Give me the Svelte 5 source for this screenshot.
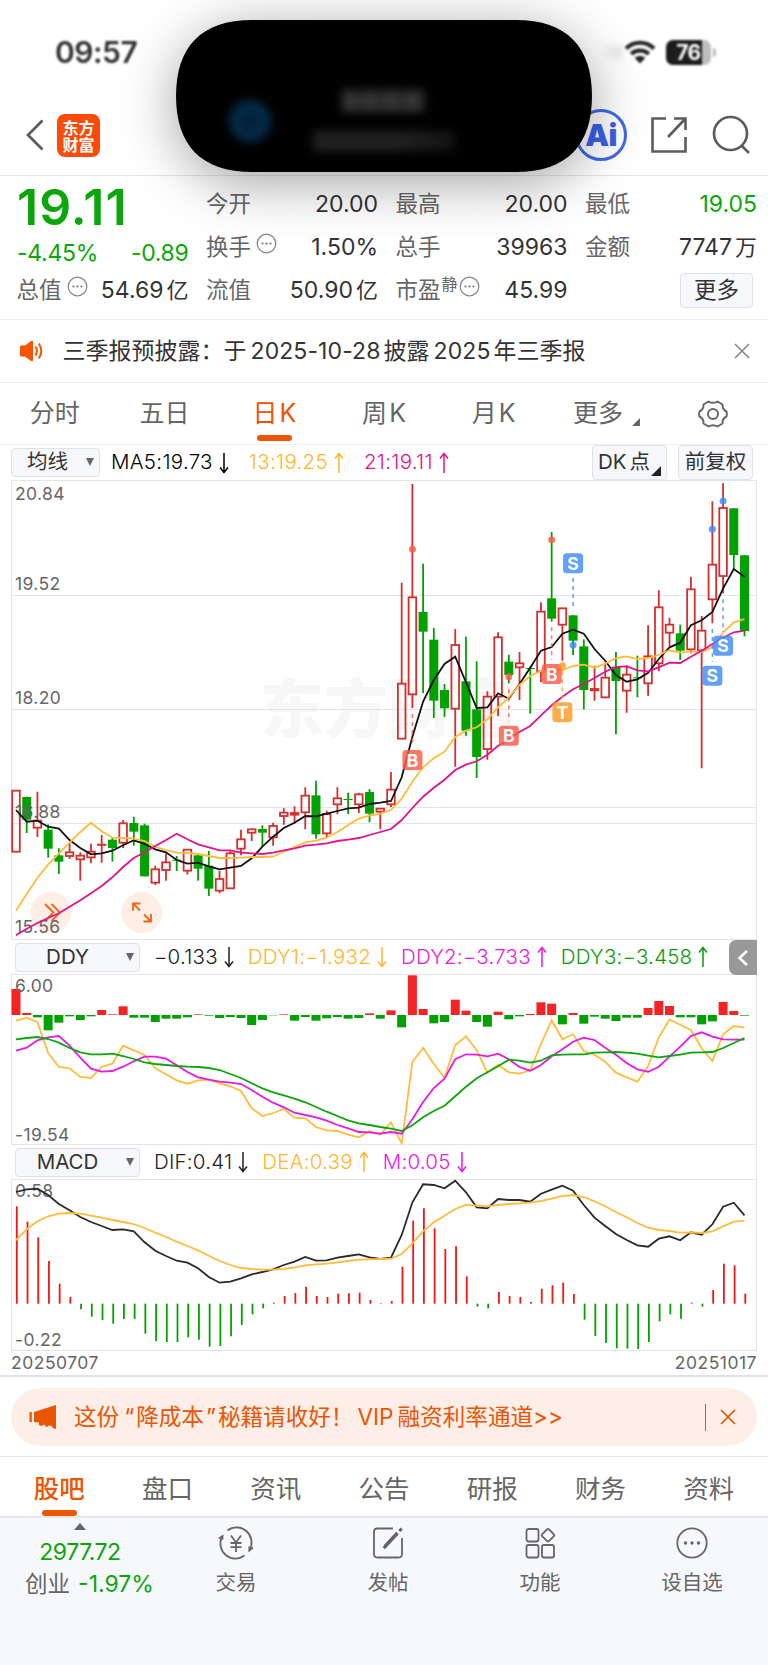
<script>
  // Stock detail page: quote header, daily K chart, DDY + MACD panels

  // chart values are stored in @3x device pixels
  const STEP = 32.14;
  const cx = (i) => (15 + i * STEP) / 3;

  const periods = [
    { cn: "分时" },
    { cn: "五日" },
    { cn: "日", latin: "K", active: true },
    { cn: "周", latin: "K" },
    { cn: "月", latin: "K" },
    { cn: "更多", more: true }
  ];

  const sections = ["股吧", "盘口", "资讯", "公告", "研报", "财务", "资料"];

  // [up, high, body top, body bottom, low]
  const candles = [
    [1, 962, 962, 1145, 1145], [0, 980, 981, 1049, 1089], [1, 965, 1052, 1073, 1101], [0, 1063, 1079, 1136, 1163],
    [0, 1135, 1156, 1175, 1212], [1, 1118, 1147, 1158, 1167], [1, 1147, 1157, 1168, 1232], [1, 1121, 1145, 1162, 1180],
    [1, 1095, 1124, 1124, 1178], [0, 1102, 1109, 1134, 1175], [1, 1050, 1060, 1118, 1134], [0, 1040, 1059, 1085, 1127],
    [0, 1061, 1066, 1219, 1219], [1, 1187, 1198, 1238, 1245], [1, 1150, 1177, 1200, 1232], [0, 1158, 1169, 1172, 1203],
    [1, 1139, 1139, 1202, 1214], [0, 1155, 1156, 1196, 1232], [0, 1143, 1187, 1256, 1278], [1, 1203, 1227, 1262, 1270],
    [1, 1143, 1150, 1255, 1255], [1, 1079, 1108, 1136, 1156], [1, 1076, 1078, 1088, 1113], [0, 1066, 1077, 1088, 1128],
    [1, 1058, 1068, 1102, 1127], [1, 1015, 1028, 1038, 1064], [1, 1009, 1029, 1034, 1061], [1, 952, 977, 1027, 1078],
    [0, 932, 976, 1093, 1106], [1, 1022, 1032, 1090, 1101], [1, 952, 985, 1003, 1033], [0, 968, 987, 990, 1032],
    [1, 968, 973, 1003, 1029], [0, 957, 966, 1031, 1057], [1, 1014, 1016, 1025, 1078], [1, 906, 959, 1003, 1011],
    [1, 338, 641, 806, 806], [1, 42, 382, 673, 714], [0, 281, 426, 485, 669], [0, 474, 509, 692, 744],
    [0, 642, 660, 715, 741], [1, 477, 525, 716, 890], [0, 500, 634, 782, 797], [0, 574, 718, 861, 924],
    [1, 664, 680, 837, 869], [1, 487, 502, 680, 739], [0, 554, 575, 615, 640], [1, 546, 580, 592, 690],
    [0, 590, 594, 597, 731], [1, 397, 425, 604, 636], [0, 186, 385, 446, 455], [1, 413, 415, 464, 572],
    [0, 435, 436, 512, 555], [0, 508, 529, 660, 718], [1, 587, 657, 661, 692], [1, 578, 623, 682, 685],
    [0, 546, 590, 633, 793], [1, 586, 614, 662, 728], [0, 557, 622, 625, 682], [1, 466, 559, 640, 677],
    [1, 361, 412, 580, 604], [1, 443, 464, 488, 529], [0, 464, 490, 542, 570], [1, 320, 358, 538, 550],
    [1, 438, 482, 541, 895], [1, 94, 284, 388, 460], [1, 40, 114, 318, 370], [0, 114, 115, 255, 300],
    [0, 255, 256, 483, 499]
  ];

  const ma5 = [1020, 1055, 1052, 1070, 1076, 1110, 1134, 1153, 1150, 1142, 1126, 1111, 1122, 1138, 1147, 1170, 1181, 1178, 1189, 1198, 1193, 1188, 1165, 1130, 1100, 1074, 1058, 1038, 1039, 1031, 1023, 1015, 1013, 1002, 998, 993, 922, 800, 695, 630, 582, 560, 637, 714, 712, 670, 686, 642, 593, 542, 531, 491, 479, 491, 537, 572, 615, 635, 628, 608, 567, 532, 518, 466, 451, 426, 355, 297, 320];
  const ma13 = [1322, 1272, 1224, 1184, 1150, 1118, 1086, 1058, 1084, 1103, 1104, 1106, 1113, 1131, 1140, 1148, 1149, 1152, 1158, 1164, 1164, 1163, 1161, 1161, 1160, 1145, 1131, 1117, 1112, 1103, 1086, 1065, 1046, 1037, 1031, 1020, 986, 935, 892, 865, 845, 801, 782, 772, 748, 712, 682, 645, 618, 603, 603, 600, 588, 584, 593, 581, 564, 559, 567, 564, 555, 541, 548, 544, 546, 531, 488, 457, 447];
  const ma21 = [1396, 1376, 1359, 1344, 1330, 1310, 1291, 1270, 1248, 1222, 1191, 1164, 1147, 1128, 1110, 1091, 1108, 1123, 1132, 1141, 1141, 1148, 1150, 1152, 1148, 1141, 1135, 1127, 1124, 1120, 1113, 1109, 1104, 1095, 1086, 1077, 1050, 1014, 980, 953, 929, 900, 884, 874, 854, 827, 809, 786, 768, 736, 706, 680, 658, 642, 624, 605, 591, 589, 601, 604, 592, 578, 579, 560, 542, 522, 503, 487, 482];

  // i = candle index, y = badge centre, dot = price point, from/to = dashed leader
  const marks = [
    { i: 37, t: "B", y: 870, dot: 238, from: 732, to: 828 },
    { i: 46, t: "B", y: 797, dot: 620, from: 658, to: 756 },
    { i: 50, t: "B", y: 612, dot: 209, from: 472, to: 570 },
    { i: 51, t: "T", y: 727, dot: 587, from: 604, to: 684 },
    { i: 52, t: "S", y: 280, dot: 525, from: 324, to: 420 },
    { i: 65, t: "S", y: 617, dot: 178, from: 477, to: 575 },
    { i: 66, t: "S", y: 527, dot: 93, from: 388, to: 486 }
  ];
  const markColor = { B: "#ff5a45", S: "#3f8cfb", T: "#ff9a22" };

  // negative = red bar above the zero line
  const ddyBars = [-78, -6, 7, 46, 23, 4, 15, 4, -15, -2, -26, 8, 8, 21, 11, 11, 7, -2, 2, 9, 6, 9, 30, 15, 1, -2, 17, 6, 17, 10, 6, 11, 9, -5, 11, -14, 37, -119, -18, 25, 21, -46, -13, 21, 35, -10, 13, 4, -3, -38, -34, 28, -6, 26, 5, 11, 18, 8, 8, -21, -42, -27, 7, 7, 28, 19, -39, -12, 2];
  const ddy1 = [272, 264, 276, 368, 411, 415, 441, 444, 410, 401, 347, 361, 376, 415, 433, 451, 461, 451, 449, 460, 469, 483, 535, 558, 549, 537, 563, 565, 591, 601, 603, 614, 622, 604, 614, 577, 640, 396, 353, 402, 443, 346, 319, 361, 428, 404, 427, 431, 421, 342, 271, 328, 313, 363, 374, 395, 428, 442, 455, 409, 322, 269, 284, 300, 355, 393, 313, 288, 293];
  const ddy2 = [362, 353, 331, 322, 318, 347, 383, 416, 425, 423, 410, 394, 380, 380, 386, 406, 426, 442, 449, 455, 458, 462, 480, 500, 518, 532, 548, 555, 562, 572, 585, 595, 606, 607, 611, 606, 611, 568, 516, 474, 446, 388, 373, 374, 379, 371, 388, 411, 422, 405, 379, 358, 335, 323, 330, 353, 374, 399, 418, 425, 410, 380, 350, 318, 307, 320, 328, 329, 329];
  const ddy3 = [328, 324, 321, 327, 338, 354, 367, 373, 373, 371, 378, 387, 397, 402, 405, 408, 410, 411, 414, 420, 432, 444, 460, 475, 487, 496, 506, 517, 531, 545, 558, 571, 580, 585, 591, 596, 603, 586, 562, 543, 527, 499, 470, 445, 427, 409, 389, 392, 398, 392, 376, 374, 373, 373, 368, 367, 366, 368, 371, 377, 382, 378, 374, 368, 367, 366, 354, 339, 324];

  const macdBars = [169, 215, 262, 333, 401, 441, 478, 500, 510, 521, 507, 507, 551, 573, 576, 576, 562, 569, 590, 588, 559, 525, 493, 475, 458, 438, 429, 410, 438, 441, 431, 430, 428, 450, 460, 453, 350, 212, 175, 235, 297, 289, 379, 470, 475, 426, 438, 441, 456, 416, 406, 398, 432, 509, 558, 579, 595, 596, 597, 576, 514, 493, 506, 458, 470, 420, 341, 346, 431];
  const dif = [126, 118, 116, 135, 162, 181, 201, 216, 228, 240, 238, 244, 277, 302, 318, 332, 338, 355, 381, 398, 395, 385, 373, 366, 358, 345, 335, 321, 332, 331, 323, 318, 313, 322, 327, 323, 255, 157, 103, 105, 115, 92, 127, 172, 175, 147, 150, 150, 155, 131, 119, 107, 122, 165, 203, 228, 252, 270, 286, 290, 266, 259, 271, 247, 254, 223, 170, 158, 196];
  const dea = [270, 238, 214, 199, 191, 189, 191, 197, 203, 210, 216, 222, 234, 248, 261, 275, 288, 301, 317, 333, 345, 354, 357, 359, 359, 357, 352, 346, 343, 341, 337, 333, 329, 328, 327, 326, 312, 280, 244, 217, 197, 177, 165, 167, 169, 165, 162, 160, 158, 153, 146, 138, 135, 141, 154, 169, 186, 202, 219, 233, 240, 243, 248, 247, 249, 244, 229, 215, 212];

  const line = (values, top) =>
    values.map((v, i) => `${cx(i).toFixed(1)},${((v - top) / 3).toFixed(1)}`).join(" ");
</script>

{#snippet arrow(up)}
  <svg class="arrow" width="10" height="22" viewBox="0 0 10 22">
    <path d={up ? "M5 21V1.5M1 6.5L5 1.5L9 6.5" : "M5 1V20.5M1 15.5L5 20.5L9 15.5"} />
  </svg>
{/snippet}

{#snippet info()}
  <svg class="info" width="21" height="21" viewBox="0 0 21 21">
    <circle cx="10.5" cy="10.5" r="9.3" fill="none" stroke="#8a8a8a" stroke-width="1.3" />
    <g fill="#777"><circle cx="6.5" cy="10.5" r="1.1" /><circle cx="10.5" cy="10.5" r="1.1" /><circle cx="14.5" cy="10.5" r="1.1" /></g>
  </svg>
{/snippet}

<main class="phone">
  <div class="status">
    <span class="time">09:57</span>
    <div class="status-right">
      <i class="ghost"></i>
      <svg width="32" height="24" viewBox="0 0 32 24">
        <g fill="none" stroke="#222" stroke-width="4">
          <path d="M2 8.5C10 0.8 22 0.8 30 8.5" />
          <path d="M7.2 14C12 9.2 20 9.2 24.8 14" />
        </g>
        <path d="M16 23.5L10.8 18C13.5 15.4 18.5 15.4 21.2 18Z" fill="#222" />
      </svg>
      <span class="battery"><b>76</b></span>
    </div>
  </div>

  <header class="navbar">
    <svg class="back" width="18" height="32" viewBox="0 0 18 32">
      <path d="M16.5 1.5L2 16L16.5 30.5" fill="none" stroke="#5c5c5c" stroke-width="2.8" />
    </svg>
    <div class="logo"><span>东方</span><span>财富</span></div>
    <div class="nav-icons">
      <div class="ai">Ai</div>
      <svg width="38" height="38" viewBox="0 0 38 38" fill="none" stroke="#5c5c5c" stroke-width="2.6">
        <path d="M16 2.5H2.5V35.5H35.5V21" />
        <path d="M24 2.5H35.5V14M35.5 2.5L18 21" />
      </svg>
      <svg width="40" height="40" viewBox="0 0 40 40" fill="none" stroke="#5c5c5c" stroke-width="2.7">
        <circle cx="19.5" cy="18.5" r="16.5" />
        <path d="M30.5 30.5L38 38" />
      </svg>
    </div>
  </header>

  <!-- expanded dynamic island, covers the title -->
  <div class="island">
    <svg width="416" height="152" viewBox="0 0 416 152">
      <path d="M0 76C0 27 25 0 76 0H340C391 0 416 27 416 76C416 125 391 152 340 152H76C25 152 0 125 0 76Z" />
    </svg>
    <i class="blur-dot"></i>
    <i class="blur-title"></i>
    <i class="blur-text"></i>
  </div>

  <section class="quote">
    <div class="col first">
      <strong class="price">19.11</strong>
      <div class="row down change"><span>-4.45%</span><span>-0.89</span></div>
      <div class="row"><label>总值{@render info()}</label><span>54.69<em>亿</em></span></div>
    </div>
    <div class="col">
      <div class="row"><label>今开</label><span>20.00</span></div>
      <div class="row"><label>换手{@render info()}</label><span>1.50%</span></div>
      <div class="row"><label>流值</label><span>50.90<em>亿</em></span></div>
    </div>
    <div class="col">
      <div class="row"><label>最高</label><span>20.00</span></div>
      <div class="row"><label>总手</label><span>39963</span></div>
      <div class="row"><label>市盈<sup>静</sup>{@render info()}</label><span>45.99</span></div>
    </div>
    <div class="col">
      <div class="row"><label>最低</label><span class="down">19.05</span></div>
      <div class="row"><label>金额</label><span>7747<em>万</em></span></div>
      <div class="row end"><button class="more-btn">更多</button></div>
    </div>
  </section>

  <section class="notice">
    <svg width="25" height="22" viewBox="0 0 25 22">
      <path d="M1 6.5Q1 5.5 2 5.5H6L12 1Q14 0 14 2V20Q14 22 12 21L6 16.5H2Q1 16.5 1 15.5Z" fill="#f95500" />
      <path d="M16.5 6.5Q19.3 11 16.5 15.5M19.8 3.5Q24.8 11 19.8 18.5" fill="none" stroke="#f95500" stroke-width="2" />
    </svg>
    <p>三季报预披露：于<span>2025-10-28</span>披露<span>2025</span>年三季报</p>
    <svg width="16" height="16" viewBox="0 0 16 16"><path d="M1 1L15 15M15 1L1 15" stroke="#888" stroke-width="1.6" /></svg>
  </section>

  <nav class="periods">
    {#each periods as p}
      <div class="period" class:active={p.active} class:has-more={p.more}>
        {p.cn}{#if p.latin}<span>{p.latin}</span>{/if}{#if p.more}<i class="corner"></i>{/if}
      </div>
    {/each}
    <div class="period">
      <svg width="32" height="32" viewBox="0 0 32 32" fill="none" stroke="#666" stroke-width="2">
        <path d="M11.5 3.5Q16 6.2 20.5 3.5L25.5 6.5Q25.3 11.8 29.5 13.5Q30.3 16 29.5 18.5Q25.3 20.2 25.5 25.5L20.5 28.5Q16 25.8 11.5 28.5L6.5 25.5Q6.7 20.2 2.5 18.5Q1.7 16 2.5 13.5Q6.7 11.8 6.5 6.5Z" stroke-linejoin="round" />
        <circle cx="16" cy="16" r="5" />
      </svg>
    </div>
  </nav>

  <div class="bar ma-bar">
    <button class="select">均线<i class="caret"></i></button>
    <span class="val black">MA5:19.73{@render arrow(false)}</span>
    <span class="val yellow">13:19.25{@render arrow(true)}</span>
    <span class="val pink">21:19.11{@render arrow(true)}</span>
    <div class="bar-buttons">
      <button class="tool dk">DK<em>点</em><i class="corner dark"></i></button>
      <button class="tool">前复权</button>
    </div>
  </div>

  <div class="chart">
    <svg width="746" height="460" viewBox="0 0 746 460">
      <text class="watermark" x="249" y="252">东方财富</text>
      <g class="grid">
        <rect x="0.5" y="0.5" width="745" height="459" />
        <path d="M0 115.5H746M0 229.5H746M0 327.5H746M0 343.5H746" />
      </g>
      {#each candles as [up, high, top, bottom, low], i}
        {#if up}
          <g class="up">
            <path d="M{cx(i)} {(high - 30) / 3}V{(top - 30) / 3}M{cx(i)} {(bottom - 30) / 3}V{(low - 30) / 3}" />
            <rect x={cx(i) - 3.8} y={(top - 30) / 3} width="7.6" height={Math.max((bottom - top) / 3, 0.2)} />
          </g>
        {:else}
          <g class="dn">
            <path d="M{cx(i)} {(high - 30) / 3}V{(low - 30) / 3}" />
            <rect x={cx(i) - 4.5} y={(top - 30) / 3} width="9" height={(bottom - top) / 3} />
          </g>
        {/if}
      {/each}
      <g class="round-btns">
        <circle cx="40" cy="432.5" r="20.5" />
        <circle cx="130.7" cy="432.5" r="20.5" />
        <path d="M34 424L42.5 432.5L34 441M40.5 424L49 432.5L40.5 441" />
        <path d="M129.5 423.5H122V431M122 423.5L129 430.5M132.5 441.5H140V434M140 441.5L133 434.5" />
      </g>
      <g class="labels">
        <text x="4" y="20">20.84</text>
        <text x="4" y="109.5">19.52</text>
        <text x="4" y="223.5">18.20</text>
        <text x="4" y="338">16.88</text>
        <text x="4" y="452.5">15.56</text>
      </g>
      <g class="lines">
        <polyline points={line(ma5, 30)} stroke="#111" />
        <polyline points={line(ma13, 30)} stroke="#ffbc3b" />
        <polyline points={line(ma21, 30)} stroke="#e4128c" />
      </g>
      {#each marks as m}
        <g fill={markColor[m.t]} stroke={markColor[m.t]} opacity="0.82">
          <circle cx={cx(m.i)} cy={(m.dot - 30) / 3} r="3.5" stroke="none" />
          <path d="M{cx(m.i)} {(m.from - 30) / 3}V{(m.to - 30) / 3}" stroke-width="1.5" stroke-dasharray="4 4" />
          <rect x={cx(m.i) - 10} y={(m.y - 30) / 3 - 10} width="20" height="20" rx="3.5" stroke="none" />
          <text class="mark" x={cx(m.i)} y={(m.y - 30) / 3 + 6.6}>{m.t}</text>
        </g>
      {/each}
    </svg>
  </div>

  <div class="bar sub-bar">
    <button class="select wide">DDY<i class="caret"></i></button>
    <span class="val dark">−0.133{@render arrow(false)}</span>
    <span class="val yellow">DDY1:−1.932{@render arrow(false)}</span>
    <span class="val magenta">DDY2:−3.733{@render arrow(true)}</span>
    <span class="val green">DDY3:−3.458{@render arrow(true)}</span>
    <button class="collapse" aria-label="collapse">
      <svg width="12" height="18" viewBox="0 0 12 18"><path d="M10 2L2.5 9L10 16" fill="none" stroke="#fff" stroke-width="2.6" /></svg>
    </button>
  </div>

  <div class="chart">
    <svg width="746" height="171" viewBox="0 0 746 171">
      <g class="grid"><rect x="0.5" y="0.5" width="745" height="170" /></g>
      {#each ddyBars as v, i}
        <rect
          x={cx(i) - 4.5}
          y={v < 0 ? 41 + v / 3 : 41}
          width="9"
          height={Math.abs(v) / 3}
          fill={v < 0 ? "#f52323" : "#00a100"}
        />
      {/each}
      <g class="labels">
        <text x="4" y="17.5">6.00</text>
        <text x="4" y="166.5">-19.54</text>
      </g>
      <g class="lines">
        <polyline points={line(ddy1, 132)} stroke="#ffbc3b" />
        <polyline points={line(ddy2, 132)} stroke="#e619e6" />
        <polyline points={line(ddy3, 132)} stroke="#0aa60a" />
      </g>
    </svg>
  </div>

  <div class="bar sub-bar">
    <button class="select wide">MACD<i class="caret"></i></button>
    <span class="val dark">DIF:0.41{@render arrow(false)}</span>
    <span class="val yellow">DEA:0.39{@render arrow(true)}</span>
    <span class="val magenta">M:0.05{@render arrow(false)}</span>
  </div>

  <div class="chart">
    <svg width="746" height="172" viewBox="0 0 746 172">
      <g class="grid"><rect x="0.5" y="0.5" width="745" height="171" /></g>
      {#each macdBars as v, i}
        <path
          d="M{cx(i) + 0.8} {(461 - 87) / 3}V{(v - 87) / 3}"
          stroke={v < 461 ? "#f51414" : "#00a100"}
          stroke-width="1.8"
        />
      {/each}
      <g class="labels">
        <text x="4" y="18">0.58</text>
        <text x="4" y="167">-0.22</text>
      </g>
      <g class="lines">
        <polyline points={line(dif, 87)} stroke="#2a2a2a" />
        <polyline points={line(dea, 87)} stroke="#ffbc3b" />
      </g>
    </svg>
  </div>
  <div class="dates"><span>20250707</span><span>20251017</span></div>

  <div class="promo-wrap">
    <div class="promo">
      <svg width="28" height="26" viewBox="0 0 28 26" fill="#ea5504">
        <path d="M0.5 8H2.8V18H0.5ZM5 8L27 1V25L23 23.5V22L20 21.5L18 23L16.5 22.5L15.5 20.5L12 22L10 21V18.5L5 18Z" />
      </svg>
      <p>这份<span class="q l">“</span>降成本<span class="q r">”</span>秘籍请收好！<span class="vip">VIP</span>融资利率通道<span>&gt;&gt;</span></p>
      <i class="divider"></i>
      <svg width="16" height="16" viewBox="0 0 16 16"><path d="M1 1L15 15M15 1L1 15" stroke="#ea5504" stroke-width="1.7" /></svg>
    </div>
  </div>

  <nav class="sections">
    {#each sections as name, i}
      <div class="section" class:active={i === 0}>{name}</div>
    {/each}
  </nav>

  <footer class="toolbar">
    <div class="index">
      <i class="tri"></i>
      <span class="down">2977.72</span>
      <div><label>创业</label><span class="down pct">-1.97%</span></div>
    </div>
    <div class="tool-item">
      <svg width="36" height="34" viewBox="0 0 36 34">
        <path d="M9.5 4.5A15 15 0 0 1 31.8 23.5M26.5 29.5A15 15 0 0 1 4.2 10.5" />
        <path d="M1 12.5L4.5 10V13.5M35 21.5L31.3 24.5V20.5" />
        <path d="M13 9.5L18 16.5L23 9.5M18 16.5V26M12.5 17H23.5M12.5 21.2H23.5" />
      </svg>
      交易
    </div>
    <div class="tool-item">
      <svg width="36" height="34" viewBox="0 0 36 34">
        <path d="M23 2.5H7.5Q4 2.5 4 6V28Q4 31.5 7.5 31.5H28.5Q32 31.5 32 28V12" />
        <path d="M15 20.5L27.5 7" stroke-width="3.6" /><path d="M13.7 22.2L16 19.5M29.3 5L31.7 2.6" stroke-width="3" />
      </svg>
      发帖
    </div>
    <div class="tool-item">
      <svg width="36" height="34" viewBox="0 0 36 34">
        <rect x="4.5" y="3" width="12" height="12.5" rx="2" />
        <rect x="4.5" y="19" width="12" height="12.5" rx="2" />
        <rect x="20" y="19" width="12" height="12.5" rx="2" />
        <rect x="21.2" y="4.4" width="9.6" height="9.6" rx="1.2" transform="rotate(45 26 9.2)" />
      </svg>
      功能
    </div>
    <div class="tool-item">
      <svg width="36" height="34" viewBox="0 0 36 34">
        <circle cx="18" cy="17" r="14.7" />
        <g fill="#666" stroke="none"><circle cx="11.5" cy="17" r="1.7" /><circle cx="18" cy="17" r="1.7" /><circle cx="24.5" cy="17" r="1.7" /></g>
      </svg>
      设自选
    </div>
  </footer>
</main>

<style>
  :global(body) {
    margin: 0;
    background: #fff;
  }

  .phone {
    position: relative;
    width: 768px;
    height: 1665px;
    display: flex;
    flex-direction: column;
    overflow: hidden;
    background: #fff;
    color: #333;
    font-family: Inter, "Noto Sans CJK SC", sans-serif;
    font-size: 23px;
    line-height: 1;
  }

  .phone * {
    box-sizing: border-box;
  }

  p {
    margin: 0;
  }

  i,
  em {
    font-style: normal;
  }

  button {
    padding: 0;
    border: 1px solid #dfe2e8;
    border-radius: 4px;
    background: #f7f8fb;
    color: #333;
    font: inherit;
  }

  svg {
    display: block;
    flex: none;
  }

  .down {
    color: #0aa60a;
  }

  .status {
    height: 80px;
    padding: 24px 57px 0 55px;
    display: flex;
    align-items: center;
    justify-content: space-between;
    filter: blur(0.8px);
  }

  .time {
    font-size: 30px;
    font-weight: 600;
    letter-spacing: -0.5px;
    color: #303030;
  }

  .status-right {
    display: flex;
    align-items: center;
    gap: 10px;
  }

  .ghost {
    width: 20px;
    height: 14px;
    margin-right: -8px;
    background: linear-gradient(to right, #fafafa, #e4e4e4);
    filter: blur(3px);
  }

  .battery {
    position: relative;
    width: 45px;
    height: 25px;
    display: flex;
    align-items: center;
    justify-content: center;
    border-radius: 7px;
    background: linear-gradient(to right, #1c1c1c 36px, #bdbdbd 36px);
    color: #fff;
    font-size: 21px;
    letter-spacing: -0.5px;
  }

  .battery::after {
    content: "";
    position: absolute;
    right: -5px;
    top: 8px;
    width: 3px;
    height: 9px;
    border-radius: 0 3px 3px 0;
    background: #bdbdbd;
  }

  .navbar {
    height: 96px;
    padding: 15px 17px 0 26px;
    display: flex;
    align-items: center;
    border-bottom: 1px solid #e6e6e8;
  }

  .logo {
    width: 43px;
    height: 43px;
    margin-left: 13px;
    display: flex;
    flex-direction: column;
    align-items: center;
    justify-content: center;
    gap: 1px;
    border-radius: 8px;
    background: #fd4a08;
    color: #fff;
    font-family: "Noto Sans CJK SC", sans-serif;
    font-size: 16px;
    font-weight: 700;
  }

  .nav-icons {
    margin-left: auto;
    display: flex;
    align-items: center;
    gap: 23px;
  }

  .ai {
    width: 52px;
    height: 52px;
    display: flex;
    align-items: center;
    justify-content: center;
    border: 3px solid #4169e8;
    border-radius: 50%;
    color: #3a62ea;
    font-size: 30px;
    font-weight: 900;
    letter-spacing: -0.5px;
  }

  .island {
    position: absolute;
    left: 176px;
    top: 20px;
    width: 416px;
    height: 152px;
    border-radius: 72px;
    box-shadow: 0 10px 56px rgba(0, 0, 0, 0.38);
  }

  .blur-dot,
  .blur-title,
  .blur-text {
    position: absolute;
  }

  .blur-dot {
    left: 53px;
    top: 80px;
    width: 42px;
    height: 42px;
    border-radius: 50%;
    background: radial-gradient(#021b2f 10%, #042c4a 45%);
    filter: blur(5px);
  }

  .blur-title {
    left: 166px;
    top: 70px;
    width: 83px;
    height: 22px;
    background: repeating-linear-gradient(to right, #353535 0 14px, #282828 14px 21px);
    filter: blur(5px);
  }

  .blur-text {
    left: 137px;
    top: 111px;
    width: 142px;
    height: 20px;
    background: linear-gradient(to right, #212121 60%, #121212);
    filter: blur(5px);
  }

  .quote {
    height: 144px;
    padding: 7px 11px 0 17px;
    display: flex;
    gap: 18px;
    border-bottom: 1px solid #eeeef0;
  }

  .col {
    flex: 1;
    display: flex;
    flex-direction: column;
  }

  .row {
    height: 43px;
    display: flex;
    align-items: center;
    justify-content: space-between;
  }

  .row label,
  .index label {
    display: flex;
    align-items: center;
    color: #666;
    font-size: 22.5px;
    letter-spacing: 0;
  }

  .row label {
    margin-left: -0.5px;
  }

  .row em {
    margin-left: 3px;
    font-size: 22px;
  }

  .row sup {
    margin: -14px 0 0 1px;
    font-size: 16px;
  }

  .info {
    margin: -9px 0 0 5px;
  }

  sup + .info {
    margin-left: 1px;
  }

  .price {
    height: 49px;
    font-size: 50px;
    line-height: 49px;
    font-weight: 600;
    letter-spacing: 1px;
    color: #0aa60a;
  }

  .change {
    height: 37px;
    padding-top: 6px;
    letter-spacing: -0.3px;
  }

  .end {
    justify-content: flex-end;
  }

  .more-btn {
    width: 73px;
    height: 35px;
    margin-right: 4px;
    font-size: 22.5px;
  }

  .notice {
    height: 63px;
    padding: 0 18px 0 19px;
    display: flex;
    align-items: center;
    border-bottom: 1px solid #eeeef0;
  }

  .notice p {
    flex: 1;
    margin-left: 18.5px;
    font-size: 23px;
  }

  .notice p span {
    margin: 0 3px 0 4px;
    letter-spacing: 0.1px;
  }

  .periods {
    height: 62px;
    display: flex;
    border-bottom: 1px solid #eeeef0;
  }

  .period {
    position: relative;
    flex: 1;
    display: flex;
    align-items: center;
    justify-content: center;
    color: #666;
    font-size: 25px;
  }

  .period span {
    margin-left: 2px;
  }

  .has-more {
    left: 3px;
  }

  .active {
    color: #ee5500;
  }

  .period.active::after,
  .section.active::after {
    content: "";
    position: absolute;
    bottom: 3px;
    left: calc(50% - 17.5px);
    width: 35px;
    height: 6px;
    border-radius: 3px;
    background: #ee5500;
  }

  .corner {
    align-self: flex-end;
    margin: 0 0 18px 9px;
    border: 4px solid transparent;
    border-right-color: #666;
    border-bottom-color: #666;
  }

  .bar {
    position: relative;
    display: flex;
    align-items: center;
    font-size: 20.5px;
  }

  .ma-bar {
    height: 35px;
    padding: 0 15px 0 11px;
  }

  .sub-bar {
    height: 34px;
    padding-left: 15px;
    border-right: 1px solid #e6e8ed;
    margin-right: 11px;
  }

  .select {
    position: relative;
    width: 89px;
    height: 29px;
    margin-right: 11px;
    padding-right: 16px;
    font-size: 20.5px;
  }

  .select.wide {
    width: 125px;
    margin-right: 14px;
    padding-right: 20px;
  }

  .caret {
    position: absolute;
    right: 5px;
    top: 9px;
    border: 4px solid transparent;
    border-top: 8px solid #666;
    border-bottom: 0;
  }

  .val {
    display: flex;
    align-items: center;
    margin-right: 20px;
    font-weight: 300;
    letter-spacing: 0.3px;
  }

  .sub-bar .val {
    margin-right: 14px;
    letter-spacing: 0.22px;
  }

  .arrow {
    margin-left: 6px;
    fill: none;
    stroke: currentColor;
    stroke-width: 1.5;
  }

  .black {
    color: #000;
  }

  .dark {
    color: #222;
  }

  .yellow {
    color: #ffb52e;
  }

  .pink {
    color: #e4128c;
  }

  .magenta {
    color: #e619e6;
  }

  .green {
    color: #0a9a0a;
  }

  .bar-buttons {
    margin-left: auto;
    display: flex;
    gap: 11px;
  }

  .tool {
    position: relative;
    width: 75px;
    height: 35px;
    font-size: 20.5px;
  }

  .dk {
    padding-right: 11px;
  }

  .dk em {
    margin-left: 3px;
  }

  .corner.dark {
    position: absolute;
    right: 5px;
    bottom: 3px;
    margin: 0;
    border-width: 5px;
    border-right-color: #222;
    border-bottom-color: #222;
  }

  .collapse {
    position: absolute;
    right: -1px;
    top: 0;
    width: 28px;
    height: 35px;
    display: flex;
    align-items: center;
    justify-content: center;
    border: 0;
    border-radius: 7px 0 0 7px;
    background: #999;
    z-index: 1;
  }

  .chart {
    padding-left: 11px;
  }

  .grid {
    fill: none;
    stroke: #e3e5ea;
  }

  .watermark {
    font-size: 64px;
    font-weight: 900;
    fill: #f7f7f7;
  }

  .up {
    fill: none;
    stroke: #d32f2f;
    stroke-width: 1.8;
  }

  .dn {
    fill: #00a100;
    stroke: #00a100;
    stroke-width: 1.8;
  }

  .dn rect {
    stroke-width: 0;
  }

  .lines {
    fill: none;
    stroke-width: 1.8;
  }

  .labels {
    fill: #666;
    font-size: 17.5px;
    letter-spacing: 0.4px;
  }

  .round-btns circle {
    fill: #fce0d2;
    opacity: 0.55;
  }

  .round-btns path {
    fill: none;
    stroke: #f2640f;
    stroke-width: 1.8;
  }

  .mark {
    fill: #fff;
    stroke: none;
    font-size: 18px;
    font-weight: 700;
    text-anchor: middle;
  }

  .dates {
    height: 25px;
    padding: 0 11px 2px;
    display: flex;
    align-items: center;
    justify-content: space-between;
    color: #666;
    font-size: 17.5px;
    letter-spacing: 0.5px;
  }

  .promo-wrap {
    height: 81px;
    padding: 11px 11px 0;
    border-top: 2px solid #dfe1e6;
    margin-top: -1px;
  }

  .promo {
    height: 58px;
    padding: 0 21px 0 18px;
    display: flex;
    align-items: center;
    border-radius: 29px;
    background: #fdeee7;
    color: #ea5504;
  }

  .promo p {
    flex: 1;
    margin-left: 17px;
    font-size: 22.6px;
  }

  .q {
    font-family: Inter, sans-serif;
  }

  .q.l {
    margin: 0 2px 0 5px;
  }

  .q.r {
    margin: 0 2px 0 2px;
  }

  .vip {
    margin: 0 4px 0 4px;
  }

  .divider {
    width: 1px;
    height: 27px;
    margin-right: 14px;
    background: #ea5504;
  }

  .sections {
    height: 62px;
    padding: 0 5px;
    display: flex;
    border-top: 1px solid #e8e8ea;
    border-bottom: 2px solid #e6e7ea;
  }

  .section {
    position: relative;
    flex: 1;
    display: flex;
    align-items: center;
    justify-content: center;
    padding-top: 4px;
    color: #666;
    font-size: 25.5px;
  }

  .section.active {
    color: #ee5500;
    font-weight: 500;
  }

  .section.active::after {
    bottom: 0;
  }

  .toolbar {
    flex: 1;
    display: flex;
    background: #f7f8fb;
  }

  .index {
    width: 160px;
    padding: 5px 0 0 0;
    display: flex;
    flex-direction: column;
    align-items: center;
    letter-spacing: -0.5px;
  }

  .index > span {
    margin: 11px 0 9px;
  }

  .index div {
    display: flex;
    align-items: center;
    gap: 8px;
    margin-left: 19px;
  }

  .pct {
    letter-spacing: 0;
  }

  .tri {
    border: 6px solid transparent;
    border-bottom: 7px solid #666;
    border-top: 0;
  }

  .tool-item {
    width: 152px;
    padding-top: 8px;
    display: flex;
    flex-direction: column;
    align-items: center;
    gap: 13px;
    color: #666;
    font-size: 20.5px;
  }

  .tool-item svg {
    fill: none;
    stroke: #666;
    stroke-width: 1.8;
  }
</style>
